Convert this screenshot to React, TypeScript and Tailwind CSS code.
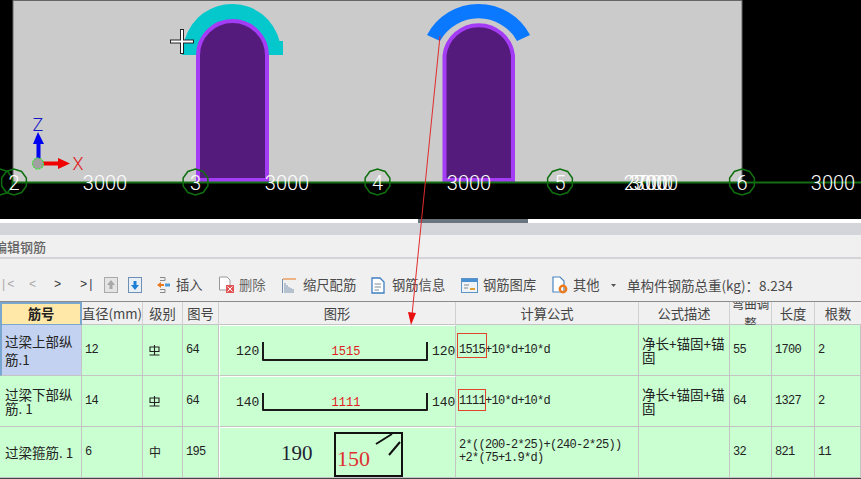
const CJK = "font-['Noto_Sans_CJK_SC','Noto_Sans',sans-serif]";
const MONO = "font-['Liberation_Mono','Noto_Sans_CJK_SC',monospace]";

const COLS = "grid grid-cols-[82px_61px_40px_36px_237px_183px_91px_42px_43px_46px]";

const HEADERS = ["直径(mm)", "级别", "图号", "图形", "计算公式", "公式描述"];

// 轴网 — 圆圈 + 编号
const AXES = [
  { x: 14, n: "2" },
  { x: 195.5, n: "3" },
  { x: 377.5, n: "4" },
  { x: 560, n: "5" },
  { x: 742, n: "6" },
];

function Decagon({ x, y }: { x: number; y: number }) {
  const pts = Array.from({ length: 10 }, (_, i) => {
    const a = (Math.PI * 2 * i) / 10 + Math.PI / 10;
    return `${x + 13 * Math.cos(a)},${y + 13 * Math.sin(a)}`;
  }).join(" ");
  return <polygon points={pts} fill="none" stroke="#0f6f0f" strokeWidth="1.5" />;
}

function Canvas() {
  return (
    <svg width="861" height="219" viewBox="0 0 861 219" className="block bg-black">
      <rect x="13" y="0.5" width="729" height="182" fill="#cbcbcb" stroke="#666" strokeWidth="1" />
      {/* 左侧拱 */}
      <path d="M185 39 A49 49 0 0 1 279.5 41 L283 41 L283 55 L182 55 L182 45 Z" fill="#04c8cc" />
      <path d="M198 182 L198 55.5 A34.5 34.5 0 0 1 267 55.5 L267 180 L198 180 Z" fill="#541b7c" stroke="#a53cf5" strokeWidth="4" />
      {/* 右侧拱 */}
      <path d="M427 35 A58.3 58.3 0 0 1 530 35 L517 41 A44 44 0 0 0 440 41 Z" fill="#0a78ff" />
      <path d="M444.5 182 L444.5 55.5 A34.5 34.5 0 0 1 513 55.5 L513 180 L444.5 180 Z" fill="#541b7c" stroke="#a53cf5" strokeWidth="4" />
      <line x1="13" y1="182.5" x2="861" y2="182.5" stroke="#146e14" strokeWidth="2" />
      <Decagon x={0} y={182} />
      {AXES.map((a) => (
        <g key={a.n}>
          <Decagon x={a.x} y={182} />
          <text x={a.x} y={190} textAnchor="middle" fontSize="20" fill="#fff" fontFamily="Roboto, sans-serif" fontWeight="300">{a.n}</text>
        </g>
      ))}
      {[105, 287, 469, 833].map((x) => (
        <text key={x} x={x} y={190} textAnchor="middle" fontSize="20" fill="#fff" fontFamily="Roboto, sans-serif" fontWeight="300">3000</text>
      ))}
      {[646, 651, 656].map((x, i) => (
        <text key={x} x={x} y={190} textAnchor="middle" fontSize="20" fill="#fff" fontFamily="Roboto, sans-serif" fontWeight="300">{i === 0 ? "2700" : "3000"}</text>
      ))}
      {/* 坐标轴 */}
      <path d="M36.5 160 L36.5 144 L33 144 L38 132 L44 144 L40.5 144 L40.5 160 Z" fill="#0000f0" />
      <path d="M43 161.5 L58 161.5 L58 158 L70 163.5 L58 169 L58 165.5 L43 165.5 Z" fill="#f00000" />
      <circle cx="38" cy="163.5" r="5.5" fill="#a0a0a0" stroke="#3ce03c" strokeWidth="1.2" strokeDasharray="2 1" />
      <text x="38" y="131" textAnchor="middle" fontSize="18" fill="#1414c8" fontFamily="Roboto, sans-serif" fontWeight="300">Z</text>
      <text x="78" y="170" textAnchor="middle" fontSize="18" fill="#e01414" fontFamily="Roboto, sans-serif" fontWeight="300">X</text>
      {/* 十字光标 */}
      <path d="M170 41.5 H194 M182 29 V54" stroke="#222" strokeWidth="4" />
      <path d="M171 41.5 H193 M182 30 V53" stroke="#fff" strokeWidth="2" />
    </svg>
  );
}

function Toolbar() {
  return (
    <div className={`${CJK} flex h-[43px] items-center border-b border-[#8c8c8c] bg-[#f0f0f0] pt-[10px] text-[13.3px] text-[#4a4a4a]`}>
      <span className={`${MONO} w-[29px] text-[12px] text-[#aaa]`}>|&lt;</span>
      <span className={`${MONO} w-[25px] text-[12px] text-[#aaa]`}>&lt;</span>
      <span className={`${MONO} w-[26px] text-[12px] text-[#333]`}>&gt;</span>
      <span className={`${MONO} w-[24px] text-[12px] text-[#333]`}>&gt;<span className="text-[#335]">|</span></span>
      <svg width="14" height="16" viewBox="0 0 14 16" className="mr-[10px]">
        <rect x="0.5" y="0.5" width="13" height="15" fill="#e4e4e4" stroke="#aaa" />
        <path d="M7 3 L11 8 H8.5 V12 H5.5 V8 H3 Z" fill="#a8a8a8" />
      </svg>
      <svg width="14" height="16" viewBox="0 0 14 16" className="mr-[14px]">
        <rect x="0.5" y="0.5" width="13" height="15" fill="#e8eef5" stroke="#6d8fb5" />
        <path d="M7 13 L11 8 H8.5 V4 H5.5 V8 H3 Z" fill="#1f7fd6" />
      </svg>
      <svg width="14" height="18" viewBox="0 0 14 18" className="mr-[6px]">
        <path d="M4 1.5 H9 V4.5 H4 M4 13.5 H9 V16.5 H4" fill="none" stroke="#888" />
        <path d="M1 9 L5 6 V8 H8 V10 H5 V12 Z" fill="#e8791c" />
        <rect x="9" y="7.5" width="5" height="3" fill="#4a9bd8" />
      </svg>
      <span className="w-[42px]">插入</span>
      <svg width="17" height="18" viewBox="0 0 17 18" className="mr-[4px]">
        <path d="M1.5 1 H9 L12 4 V14 H1.5 Z" fill="#fff" stroke="#999" />
        <rect x="8" y="9" width="8" height="8" fill="#e25555" />
        <path d="M9.5 10.5 L14.5 15.5 M14.5 10.5 L9.5 15.5" stroke="#fff" />
      </svg>
      <span className="w-[43px] text-[#666]">删除</span>
      <svg width="15" height="16" viewBox="0 0 15 16" className="mr-[6px]">
        <path d="M0.5 2 V16 M3 6 V16 M5 8 V16 M7 10 V16 M9 11 V16 M11 12 V16" stroke="#7a93ad" />
        <path d="M1 2 H14" stroke="#e8791c" />
      </svg>
      <span className="w-[68px]">缩尺配筋</span>
      <svg width="14" height="17" viewBox="0 0 14 17" className="mr-[7px]">
        <path d="M1 1 H9 L13 5 V16 H1 Z" fill="#fff" stroke="#3f7fc0" strokeWidth="1.3" />
        <path d="M3.5 7 H10 M3.5 10 H10 M3.5 13 H8" stroke="#7a8a9a" />
      </svg>
      <span className="w-[69px]">钢筋信息</span>
      <svg width="17" height="15" viewBox="0 0 17 15" className="mr-[5px]">
        <rect x="0.5" y="0.5" width="16" height="14" fill="#eef3f8" stroke="#5d94c8" />
        <rect x="1" y="1" width="15" height="3" fill="#4a90d0" />
        <path d="M3 7 H8 M3 10 H7" stroke="#888" />
        <path d="M9 11 H14" stroke="#e0a030" strokeWidth="2" />
      </svg>
      <span className="w-[69px]">钢筋图库</span>
      <svg width="16" height="18" viewBox="0 0 16 18" className="mr-[5px]">
        <path d="M1 1 H8 L12 5 V16 H1 Z" fill="#fff" stroke="#4a86c0" strokeWidth="1.2" />
        <circle cx="11" cy="13" r="3.2" fill="none" stroke="#ec7a1a" strokeWidth="2.4" />
      </svg>
      <span className="w-[38px]">其他</span>
      <svg width="5" height="3" viewBox="0 0 5 3" className="mr-[11px]">
        <path d="M0 0 H5 L2.5 3 Z" fill="#555" />
      </svg>
      <span className="text-[13.5px]">单构件钢筋总重(kg)：8.234</span>
    </div>
  );
}

// 钢筋级别符号
function GradeMark() {
  return (
    <svg width="11" height="11" viewBox="0 0 11 11" className="block">
      <path d="M1 2 H10 V6.5 H1 Z M5.5 0 V10 M0.5 10 H10.5" fill="none" stroke="#222" strokeWidth="1.1" />
    </svg>
  );
}

function BarShape({ left, mid, right, top, bottom }: { left: string; mid: string; right: string; top: number; bottom: number }) {
  return (
    <svg width="236" height="50" viewBox="0 0 236 50" className="block">
      <text x="16" y="29" fontSize="13" fill="#222" fontFamily="Liberation Mono, monospace">{left}</text>
      <path d={`M43 ${top} V${bottom} H207 V${top}`} fill="none" stroke="#1a1a1a" strokeWidth="2" strokeLinejoin="round" />
      <text x="126" y="29" textAnchor="middle" fontSize="12" fill="#e02020" fontFamily="Liberation Mono, monospace">{mid}</text>
      <text x="212" y="29" fontSize="13" fill="#222" fontFamily="Liberation Mono, monospace">{right}</text>
    </svg>
  );
}

function StirrupShape() {
  return (
    <svg width="236" height="50" viewBox="0 0 236 50" className="block">
      <text x="61" y="32" fontSize="21" fill="#223" fontFamily="Liberation Serif, serif">190</text>
      <path d="M115 48 V5 H182 V48 Z" fill="none" stroke="#111" strokeWidth="2" />
      <text x="117" y="38" fontSize="22" fill="#e03030" fontFamily="Liberation Serif, serif">150</text>
      <path d="M156 16 L172 6 M169 27 L180 14" stroke="#111" strokeWidth="2" />
    </svg>
  );
}

const ROWS = [
  {
    name: "过梁上部纵筋.1", nameCls: "leading-[18px]", dia: "12", grade: <GradeMark />, fig: "64",
    shape: <BarShape left="120" mid="1515" right="120" top={16} bottom={34} />,
    formula: "1515+10*d+10*d", desc: "净长+锚固+锚固", bend: "55", len: "1700", count: "2",
    box: "left-[1px] top-[8px] h-[25px] w-[30px]",
  },
  {
    name: "过梁下部纵筋. 1", nameCls: "leading-[14px]", dia: "14", grade: <GradeMark />, fig: "64",
    shape: <BarShape left="140" mid="1111" right="140" top={16} bottom={33} />,
    formula: "1111+10*d+10*d", desc: "净长+锚固+锚固", bend: "64", len: "1327", count: "2",
    box: "left-[2px] top-[13px] h-[22px] w-[28px]",
  },
  {
    name: "过梁箍筋. 1", nameCls: "leading-[18px] whitespace-nowrap", dia: "6", grade: "中", fig: "195",
    shape: <StirrupShape />,
    formula: "2*((200-2*25)+(240-2*25))\n+2*(75+1.9*d)", desc: "", bend: "32", len: "821", count: "11",
    box: "",
  },
];

const CELL = `${MONO} flex items-center border-b border-r border-[#c4c4c4] bg-[#caffd2] pl-[3px] text-[12px] tracking-[-0.7px] text-[#222]`;

export default function App() {
  return (
    <div className="relative h-[479px] w-[861px] overflow-hidden bg-[#f0f0f0]">
      <Canvas />
      <div className="relative h-[4px] bg-white">
        <div className="absolute left-[418px] top-0 h-[4px] w-[110px] bg-[#6a747e]" />
      </div>
      <div className="h-[12px] bg-[#d3d5da]" />
      <div className={`${CJK} flex h-[24px] items-center overflow-hidden border-b-2 border-[#d4d4d8] bg-[#f0f0f0] pt-[2px] text-[13px] font-medium text-[#666]`}>
        <span className="-ml-[6px] whitespace-nowrap">编辑钢筋</span>
      </div>
      <Toolbar />
      <div className={`${CJK} ${COLS} h-[23px] border-b border-[#c4c4c4] bg-[#f0f0f0] text-[13.3px] text-[#444]`}>
        <div className="flex items-center justify-center border-2 border-[#7aa7d0] bg-[#ffe8a8] font-bold text-[#222]">筋号</div>
        {HEADERS.map((h) => (
          <div key={h} className="flex items-center justify-center whitespace-nowrap border-r border-[#d0d0d0]">{h}</div>
        ))}
        <div className="flex items-center justify-center overflow-hidden border-r border-[#d0d0d0] text-center text-[12.5px] leading-[19px]">
          <span className="-mt-[1px]">弯曲调整</span>
        </div>
        <div className="flex items-center justify-center border-r border-[#d0d0d0]">长度</div>
        <div className="flex items-center justify-center">根数</div>
      </div>
      {ROWS.map((r, i) => (
        <div key={r.name} className={`${COLS} h-[51px]`}>
          <div className={`${CJK} flex items-center border-b border-r border-[#c4c4c4] pr-[6px] text-[13.5px] text-[#222] ${r.nameCls} ${i === 0 ? "border-l-2 border-l-[#7aa7d0] bg-[#c2d2f0] pl-[3px]" : "bg-[#caffd2] pl-[5px]"}`}>
            {r.name}
          </div>
          <div className={CELL}>{r.dia}</div>
          <div className={`${CELL} ${CJK} !pl-[6px]`}>{r.grade}</div>
          <div className={CELL}>{r.fig}</div>
          <div className="overflow-hidden border-b border-l border-r border-t border-[#c4c4c4] border-l-white border-t-white bg-[#caffd2]">{r.shape}</div>
          <div className={`${CELL} relative whitespace-pre-line leading-[13px]`}>
            {r.formula}
            {r.box && <span className={`absolute border border-[#e0452c] ${r.box}`} />}
          </div>
          <div className={`${CJK} flex items-center border-b border-r border-[#c4c4c4] bg-[#caffd2] pl-[3px] pr-[2px] text-[13.5px] leading-[14px] text-[#222]`}>
            {r.desc}
          </div>
          <div className={CELL}>{r.bend}</div>
          <div className={CELL}>{r.len}</div>
          <div className={CELL}>{r.count}</div>
        </div>
      ))}
      <div className="h-[1px] bg-[#444]" />
      {/* 红色引线 */}
      <svg width="861" height="479" viewBox="0 0 861 479" className="pointer-events-none absolute inset-0">
        <line x1="440" y1="36" x2="412" y2="315" stroke="#e02b2b" strokeWidth="1" />
        <path d="M408 312 L416 313 L411 325 Z" fill="#e81010" />
      </svg>
    </div>
  );
}
